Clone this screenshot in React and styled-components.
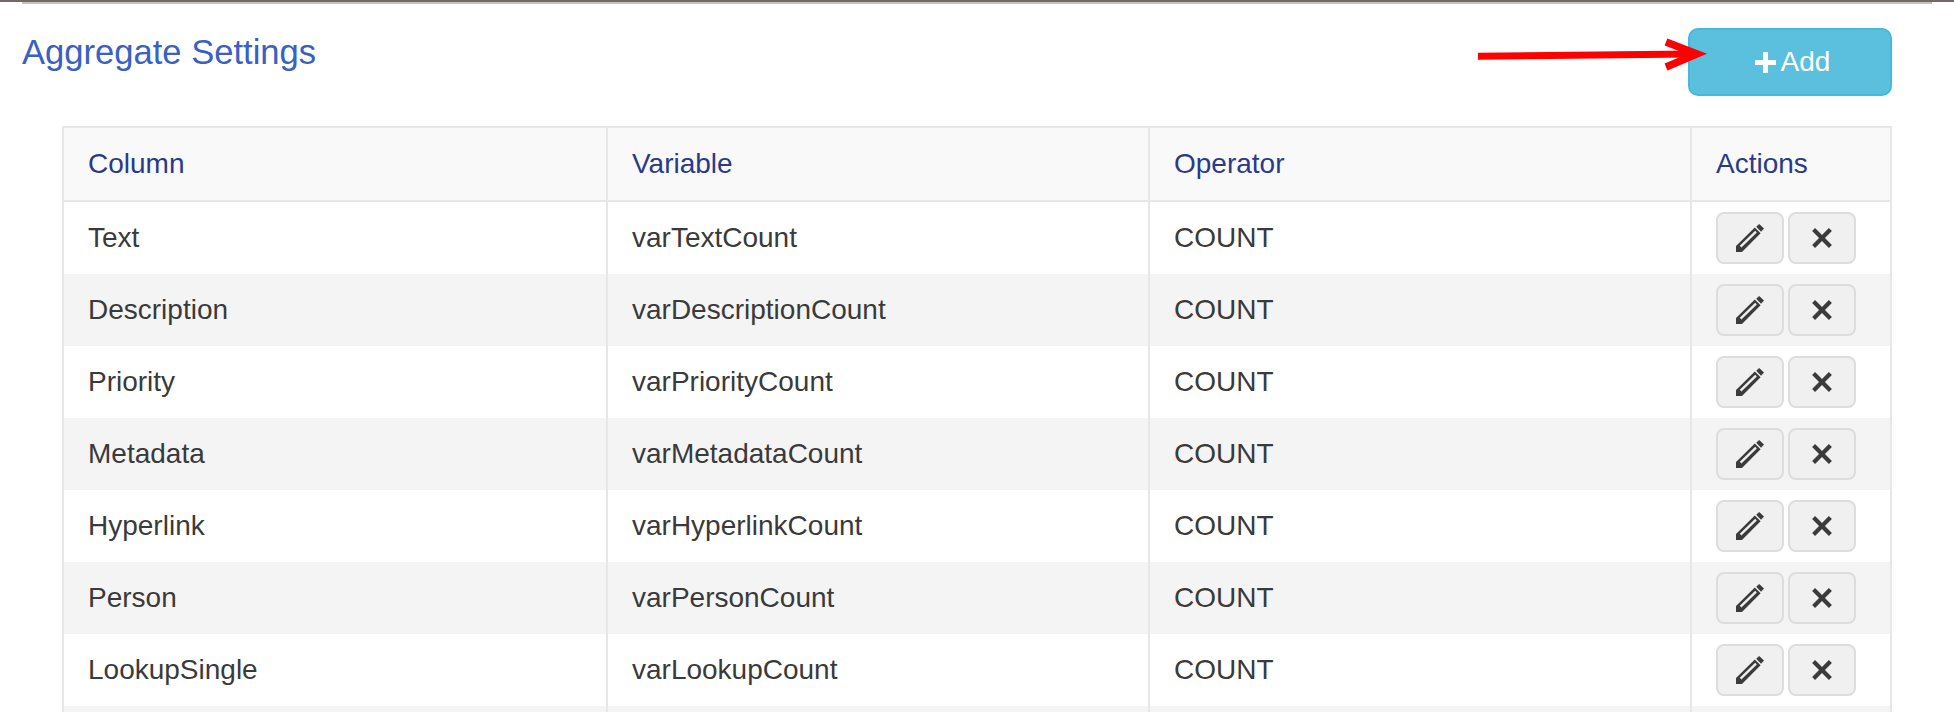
import React from "react";
import styled, { createGlobalStyle } from "styled-components";

const Global = createGlobalStyle`
  html, body { margin: 0; padding: 0; background: #fff; height: 712px; overflow: hidden; }
  body { font-family: "Liberation Sans", Arial, sans-serif; color: #333; }
`;

const Page = styled.div`
  position: relative;
  width: 1954px;
  height: 712px;
  overflow: hidden;
  border-top: 2px solid #6f6a68;
  box-sizing: border-box;
`;
const TopRule = styled.div`
  height: 2px;
  margin: 0 22px;
  background: #c9c2bf;
`;
const Marker = styled.span`
  position: absolute;
  left: 978px;
  top: -2px;
  width: 6px;
  height: 2px;
  background: #000;
`;
const Section = styled.section`
  padding: 0 62px 0 22px;
`;
const Header = styled.header`
  display: flex;
  justify-content: space-between;
  align-items: flex-start;
  height: 122px;
  padding-top: 24px;
  box-sizing: border-box;
`;
const Title = styled.h2`
  margin: 4px 0 0;
  font-size: 34.6px;
  line-height: 40px;
  font-weight: 400;
  color: #3a60c4;
`;
const AddButton = styled.button`
  display: flex;
  align-items: center;
  justify-content: center;
  gap: 5px;
  width: 204px;
  height: 68px;
  box-sizing: border-box;
  background: #5bc0de;
  border: 2px solid #46b8da;
  border-radius: 10px;
  color: #fff;
  font: 400 28px "Liberation Sans", Arial, sans-serif;
  padding: 0 0 0 5px;
`;
const Arrow = styled.svg`
  position: absolute;
  left: 1470px;
  top: 27px;
`;
const TableWrap = styled.div`
  margin-left: 40px;
`;
const Table = styled.table`
  width: 1830px;
  table-layout: fixed;
  border-collapse: separate;
  border-spacing: 0;
  font-size: 28px;
`;
const Th = styled.th`
  height: 72px;
  padding: 0 0 0 24px;
  text-align: left;
  font-weight: 400;
  color: #2a3a88;
  background: #f9f9f9;
  border-top: 2px solid #e7e7e7;
  border-bottom: 2px solid #e7e7e7;
  border-left: 2px solid #e7e7e7;
  &:last-child { border-right: 2px solid #e7e7e7; }
`;
const Row = styled.tr`
  background: ${(p) => (p.$shade ? "#f4f4f4" : "#fff")};
`;
const Td = styled.td`
  height: 72px;
  padding: 0 0 0 24px;
  color: #3a3a3a;
  border-left: 2px solid #e7e7e7;
  &:last-child { border-right: 2px solid #e7e7e7; }
`;
const Actions = styled.div`
  display: flex;
  gap: 4px;
`;
const IconButton = styled.button`
  display: flex;
  align-items: center;
  justify-content: center;
  width: 68px;
  height: 52px;
  box-sizing: border-box;
  padding: 0;
  background: #f0f0f0;
  border: 2px solid #ddd;
  border-radius: 8px;
`;

const Pencil = () => (
  <svg width="28" height="28" viewBox="0 0 28 28">
    <path fill="#3b3b3b" d="M20.2 2.8 L23.2 0 L28 4.6 L25 7.8 Z" />
    <path
      fill="#3b3b3b"
      fillRule="evenodd"
      d="M0 22 L18.8 3.4 L24.6 9.2 L6 28 L0 28 Z M3.8 21.8 L5.4 23.4 L20.8 8.4 L19.2 6.8 Z"
    />
  </svg>
);
const Cross = () => (
  <svg width="22" height="22" viewBox="0 0 22 22">
    <path d="M2.6 2.6 L19.4 19.4 M19.4 2.6 L2.6 19.4" stroke="#3b3b3b" strokeWidth="4.2" />
  </svg>
);
const Plus = () => (
  <svg width="21" height="21" viewBox="0 0 21 21">
    <path d="M8 0h5v8h8v5h-8v8H8v-8H0V8h8z" fill="#fff" />
  </svg>
);

const rows = [
  ["Text", "varTextCount"],
  ["Description", "varDescriptionCount"],
  ["Priority", "varPriorityCount"],
  ["Metadata", "varMetadataCount"],
  ["Hyperlink", "varHyperlinkCount"],
  ["Person", "varPersonCount"],
  ["LookupSingle", "varLookupCount"],
];

export default function App() {
  return (
    <Page>
      <Global />
      <Marker />
      <TopRule />
      <Section>
        <Header>
          <Title>Aggregate Settings</Title>
          <AddButton>
            <Plus />
            Add
          </AddButton>
        </Header>
        <TableWrap>
          <Table>
            <colgroup>
              <col style={{ width: 544 }} />
              <col style={{ width: 542 }} />
              <col style={{ width: 542 }} />
              <col style={{ width: 202 }} />
            </colgroup>
            <thead>
              <tr>
                <Th>Column</Th>
                <Th>Variable</Th>
                <Th>Operator</Th>
                <Th>Actions</Th>
              </tr>
            </thead>
            <tbody>
              {rows.map(([c, v], i) => (
                <Row key={c} $shade={i % 2 === 1}>
                  <Td>{c}</Td>
                  <Td>{v}</Td>
                  <Td>COUNT</Td>
                  <Td>
                    <Actions>
                      <IconButton><Pencil /></IconButton>
                      <IconButton><Cross /></IconButton>
                    </Actions>
                  </Td>
                </Row>
              ))}
              <Row $shade>
                <Td /><Td /><Td /><Td />
              </Row>
            </tbody>
          </Table>
        </TableWrap>
      </Section>
      <Arrow width="240" height="50" viewBox="0 0 240 50">
        <path d="M8 27.3 L222 25" stroke="#f00" strokeWidth="7" fill="none" />
        <path d="M196 13 L227 25 L196 38" stroke="#f00" strokeWidth="7.5" fill="none" />
      </Arrow>
    </Page>
  );
}
